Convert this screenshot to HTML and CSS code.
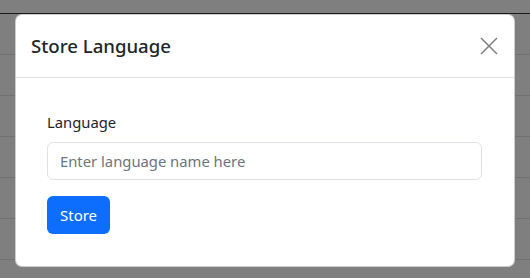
FILE: index.html
```html
<!DOCTYPE html>
<html>
<head>
    <title>Store Language</title>
    <link rel="stylesheet" href="styles.css">
</head>
<body>
    <div class="page">
        <div class="table-head"></div>
        <div class="table-row"></div>
        <div class="table-row"></div>
        <div class="table-row"></div>
        <div class="table-row"></div>
        <div class="table-row"></div>
        <div class="table-row"></div>
    </div>

    <div class="modal">
        <div class="modal-content">
            <div class="modal-header">
                <h5 class="modal-title">Store Language</h5>
                <button type="button" class="btn-close" aria-label="Close">
                    <svg viewBox="0 0 18 18" width="18" height="18">
                        <path d="M1 1L17 17M17 1L1 17" stroke="#000" stroke-width="1.5" fill="none"/>
                    </svg>
                </button>
            </div>
            <div class="modal-body">
                <form class="lang-form">
                    <label for="language" class="form-label">Language</label>
                    <input type="text" id="language" class="form-control" placeholder="Enter language name here">
                    <button type="button" class="btn-store">Store</button>
                </form>
            </div>
        </div>
    </div>
</body>
</html>
```

FILE: styles.css
```css
body {
    margin: 0;
    background: #7f7f7f;
    font-family: "Noto Sans", "Open Sans", sans-serif;
    overflow: hidden;
}
.page {
    height: 278px;
}
.table-head {
    height: 13px;
    border-bottom: 1px solid #1c1c1c;
}
.table-row {
    height: 40px;
    border-bottom: 1px solid #6f7173;
}
.modal {
    position: absolute;
    top: 14px;
    left: 15px;
    width: 500px;
}
.modal-content {
    background: #fff;
    border: 1px solid rgba(0,0,0,0.2);
    border-radius: 7px;
}
.modal-header {
    display: flex;
    align-items: center;
    justify-content: space-between;
    padding: 16px;
    border-bottom: 1px solid #dee2e6;
}
.modal-title {
    margin: 0 0 0 -1px;
    font-size: 18.6px;
    font-weight: 500;
    line-height: 30px;
    color: #212529;
}
.btn-close {
    background: none;
    border: none;
    padding: 0;
    width: 18px;
    height: 18px;
    margin-right: 0;
    opacity: 0.5;
    cursor: pointer;
}
.btn-close svg {
    display: block;
}
.modal-body {
    padding: 16px;
}
.lang-form {
    padding: 16px 16px 16px 15px;
}
.form-label {
    display: block;
    margin-bottom: 8px;
    font-size: 14.8px;
    line-height: 24px;
    color: #212529;
}
.form-control {
    display: block;
    box-sizing: border-box;
    width: 100%;
    height: 38px;
    padding: 6px 12px;
    font-family: inherit;
    font-size: 14.8px;
    color: #212529;
    border: 1px solid #dee2e6;
    border-radius: 6px;
    margin-bottom: 16px;
}
.form-control::placeholder {
    color: #6c757d;
}
.btn-store {
    display: block;
    height: 38px;
    padding: 6px 13px;
    font-family: inherit;
    font-size: 15px;
    color: #fff;
    background: #0d6efd;
    border: none;
    border-radius: 6px;
    cursor: pointer;
}
```
